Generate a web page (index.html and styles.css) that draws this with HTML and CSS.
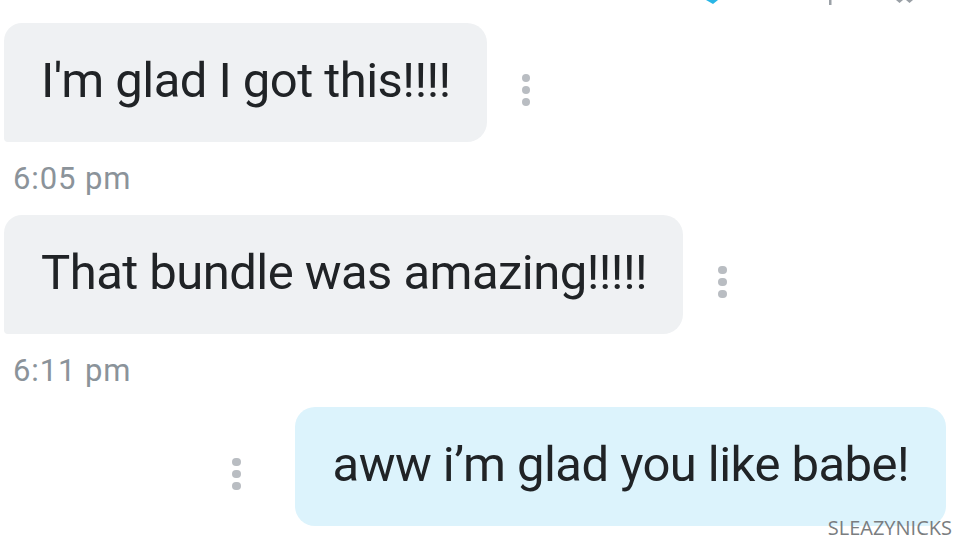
FILE: index.html
```html
<!DOCTYPE html>
<html lang="en">
<head>
    <meta charset="UTF-8">
    <meta name="viewport" content="width=device-width, initial-scale=1.0">
    <title>Chat</title>
    <link rel="stylesheet" href="styles.css">
</head>
<body>
    <div class="chat">
        <svg class="toolbar" width="963" height="23" viewBox="0 0 963 23">
            <path d="M706 0 L718 0 L713 4 Z" fill="#29b6e6"/>
            <rect x="829" y="0" width="2.5" height="5" fill="#9aa0a6"/>
            <path d="M896 0 L903 0 L899.5 3 Z M906 0 L913 0 L909.5 3 Z" fill="#9aa0a6"/>
        </svg>

        <div class="row">
            <div class="bubble in">I'm glad I got this!!!!</div>
            <div class="more"><span></span><span></span><span></span></div>
        </div>
        <div class="time">6:05 pm</div>

        <div class="row">
            <div class="bubble in">That bundle was amazing!!!!!</div>
            <div class="more"><span></span><span></span><span></span></div>
        </div>
        <div class="time">6:11 pm</div>

        <div class="row mine">
            <div class="more"><span></span><span></span><span></span></div>
            <div class="bubble out">aww i’m glad you like babe!</div>
        </div>

        <div class="watermark">SLEAZYNICKS</div>
    </div>
</body>
</html>
```

FILE: styles.css
```css
body {
    margin: 0;
    background: #ffffff;
    font-family: Roboto, "Noto Sans", sans-serif;
    overflow: hidden;
}
.chat {
    position: relative;
    width: 963px;
    height: 550px;
}
.toolbar {
    display: block;
}
.row {
    display: flex;
    align-items: center;
    height: 119px;
}
.row.mine {
    justify-content: flex-end;
    padding-right: 17px;
}
.bubble {
    height: 119px;
    display: flex;
    align-items: center;
    box-sizing: border-box;
    font-size: 49px;
    color: #202326;
    letter-spacing: -0.55px;
    white-space: nowrap;
}
.bubble.in {
    margin-left: 4px;
    padding: 0 36px 4px 37px;
    background: #eff1f3;
    border-radius: 18px 20px 20px 4px;
}
.bubble.out {
    padding: 0 37px 4px 38px;
    background: #dcf3fc;
    border-radius: 20px;
}
.more {
    display: flex;
    flex-direction: column;
    gap: 3.5px;
    margin: 15px 0 0 35px;
}
.mine .more {
    margin: 15px 54px 0 0;
}
.more span {
    width: 8.5px;
    height: 8.5px;
    border-radius: 50%;
    background: #b9bdc2;
}
.time {
    height: 73px;
    line-height: 73px;
    padding-left: 13px;
    font-size: 31px;
    letter-spacing: 0.9px;
    color: #8b939a;
}
.watermark {
    position: absolute;
    right: 11px;
    top: 514px;
    font-family: "Open Sans", sans-serif;
    font-size: 20px;
    color: #7a7d80;
}
```
